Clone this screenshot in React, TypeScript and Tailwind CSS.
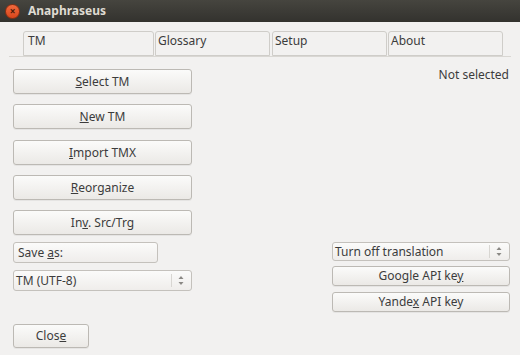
import React from "react";

const btn =
  "flex items-center justify-center border border-[#bcb9b4] rounded-[3px] bg-gradient-to-b from-[#fbfbfa] to-[#ebe9e6] shadow-[0_1px_0_rgba(0,0,0,0.05)] text-[#3c3c3c] text-[12px]";

function Spin() {
  return (
    <div className="flex items-center h-full">
      <div className="w-px h-[13px] bg-[#d8d6d2] mr-[6px]" />
      <svg width="6" height="11" viewBox="0 0 6 11">
        <path d="M3 1 L5.5 4 L0.5 4 Z" fill="#8a8884" />
        <path d="M3 10 L5.5 7 L0.5 7 Z" fill="#8a8884" />
      </svg>
    </div>
  );
}

export default function App() {
  return (
    <div
      className="w-[520px] h-[355px] bg-[#f2f1f0] text-[#3c3c3c] overflow-hidden"
      style={{ fontFamily: '"Noto Sans", "Open Sans", sans-serif' }}
    >
      <div className="h-[22px] bg-gradient-to-b from-[#46453f] to-[#33322e] flex items-center pl-[5px]">
        <div className="w-[15px] h-[15px] rounded-full bg-gradient-to-b from-[#f26a3d] to-[#d8461b] flex items-center justify-center border border-[#8a2f12]">
          <span className="text-[#4a1a08] text-[10px] leading-none font-bold">×</span>
        </div>
        <span className="ml-[8px] text-[#dfdbd2] text-[12px] font-bold">Anaphraseus</span>
      </div>

      <div className="mt-[9px] ml-[9px] w-[502px] h-[26px] border-b border-[#d9d7d3] flex pl-[14px]">
        <div className="w-[131px] h-[25px] border border-[#cfcdc9] rounded-t-[3px] px-[4px] text-[12px] leading-[16px] pt-[1px]">TM</div>
        <div className="w-[115px] h-[25px] ml-[1px] border border-[#cfcdc9] rounded-t-[3px] px-[2px] text-[12px] leading-[16px] pt-[1px]">Glossary</div>
        <div className="w-[115px] h-[25px] ml-[2px] border border-[#cfcdc9] rounded-t-[3px] px-[2px] text-[12px] leading-[16px] pt-[1px]">Setup</div>
        <div className="w-[115px] h-[25px] ml-[1px] border border-[#cfcdc9] rounded-t-[3px] px-[2px] text-[12px] leading-[16px] pt-[1px]">About</div>
      </div>

      <div className="flex pl-[13px] pr-[10px]">
        <div className="w-[179px] flex flex-col pt-[12px]">
          <div className={`${btn} h-[25px]`}><span><u>S</u>elect TM</span></div>
          <div className={`${btn} h-[25px] mt-[10px]`}><span><u>N</u>ew TM</span></div>
          <div className={`${btn} h-[25px] mt-[11px]`}><span><u>I</u>mport TMX</span></div>
          <div className={`${btn} h-[25px] mt-[10px]`}><span><u>R</u>eorganize</span></div>
          <div className={`${btn} h-[25px] mt-[10px]`}><span>In<u>v</u>. Src/Trg</span></div>
          <div className="w-[145px] h-[21px] mt-[7px] border border-[#c4c1bc] rounded-[3px] bg-gradient-to-b from-[#fbfbfa] to-[#efedeb] text-[12px] flex items-center pl-[4px]">
            <span>Save <u>a</u>s:</span>
          </div>
          <div className="h-[21px] mt-[7px] border border-[#c4c1bc] rounded-[3px] bg-gradient-to-b from-[#fbfbfa] to-[#efedeb] text-[12px] flex items-center justify-between pl-[2px] pr-[7px]">
            <span>TM (UTF-8)</span>
            <Spin />
          </div>
          <div className={`${btn} w-[76px] h-[24px] mt-[33px]`}><span>Clos<u>e</u></span></div>
        </div>

        <div className="flex-1 flex flex-col items-end pt-[10px]">
          <div className="text-[12px] leading-[16px] mr-[1px]">Not selected</div>
          <div className="w-[178px] flex flex-col mt-[159px]">
            <div className="h-[19px] border border-[#c4c1bc] rounded-[3px] bg-gradient-to-b from-[#fbfbfa] to-[#efedeb] text-[12px] flex items-center justify-between pl-[2px] pr-[7px]">
              <span>Turn off translation</span>
              <Spin />
            </div>
            <div className={`${btn} h-[20px] mt-[5px]`}><span>Google API ke<u>y</u></span></div>
            <div className={`${btn} h-[20px] mt-[6px]`}><span>Yande<u>x</u> API key</span></div>
          </div>
        </div>
      </div>
    </div>
  );
}
